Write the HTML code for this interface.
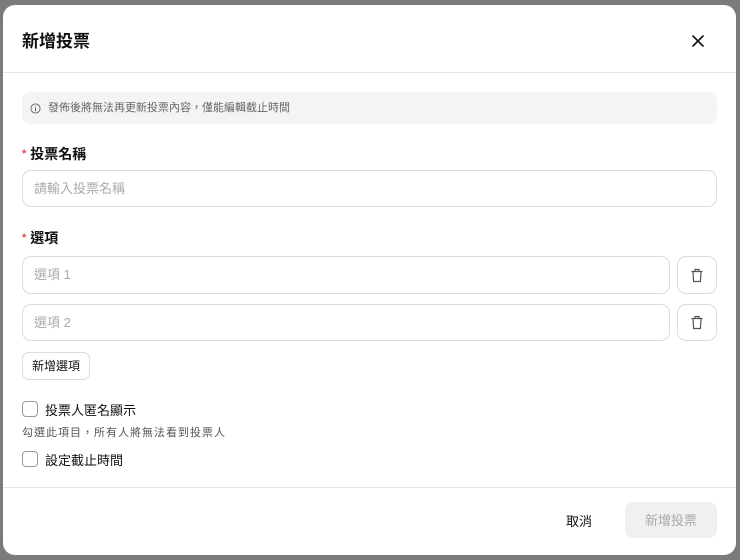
<!DOCTYPE html>
<html><head><meta charset="utf-8"><style>
*{box-sizing:border-box;margin:0;padding:0}
body{width:740px;height:560px;background:#7b7b7b;font-family:"Liberation Sans","Noto Sans CJK TC",sans-serif;position:relative;overflow:hidden;color:#111}
.m{position:absolute;left:3px;top:5px;width:733px;height:550px;background:#fff;border-radius:12px}
.a{position:absolute}
.title{left:19px;top:22px;font-size:17px;font-weight:bold}
.hr{left:0;width:733px;height:1px;background:#e3e3e3}
.info{left:19px;top:87px;width:695px;height:32px;background:#f4f4f4;border-radius:8px;font-size:11px;color:#666;line-height:32px;padding-left:26px}
.lab{font-size:14px;font-weight:bold;left:19px}
.lab b{color:#e5484d;font-size:11px;margin-right:4px;vertical-align:2px}
.in{border:1px solid #dcdcdc;border-radius:9px;height:38px;font-size:13px;color:#aaa;line-height:36px;padding-left:11px}
.tb{left:674px;width:40px;height:38px;border:1px solid #dcdcdc;border-radius:9px;display:flex;align-items:center;justify-content:center}
.btn{left:19px;top:347px;width:68px;height:28px;border:1px solid #dcdcdc;border-radius:7px;font-size:12px;line-height:26px;text-align:center}
.cb{left:19px;width:16px;height:16px;border:1.5px solid #999;border-radius:4px}
.ct{left:42px;font-size:13px;top:0}
</style></head><body><div class="m">
<div class="a title">新增投票</div>
<svg class="a" style="left:689px;top:30px" width="12" height="12" viewBox="0 0 12 12"><path d="M1 1L11 11M11 1L1 11" stroke="#111" stroke-width="1.6" stroke-linecap="round"/></svg>
<div class="a hr" style="top:67px"></div>
<div class="a info">發佈後將無法再更新投票內容，僅能編輯截止時間</div>
<svg class="a" style="left:27px;top:98px" width="11" height="11" viewBox="0 0 12 12"><circle cx="6" cy="6" r="5" fill="none" stroke="#666" stroke-width="1"/><path d="M6 5.2V9M6 3v1" stroke="#666" stroke-width="1.1"/></svg>
<div class="a lab" style="top:139px"><b>*</b>投票名稱</div>
<div class="a in" style="left:19px;top:165px;width:695px;height:37px">請輸入投票名稱</div>
<div class="a lab" style="top:223px"><b>*</b>選項</div>
<div class="a in" style="left:19px;top:251px;width:648px">選項 1</div>
<div class="a tb" style="top:251px"><svg width="14" height="15" viewBox="0 0 14 15"><path d="M1.5 3.5H12.5M5 3.5V1.5H9V3.5M3 3.5L3.6 13.5H10.4L11 3.5" fill="none" stroke="#555" stroke-width="1.2"/></svg></div>
<div class="a in" style="left:19px;top:299px;width:648px;height:37px">選項 2</div>
<div class="a tb" style="top:299px;height:37px"><svg width="14" height="15" viewBox="0 0 14 15"><path d="M1.5 3.5H12.5M5 3.5V1.5H9V3.5M3 3.5L3.6 13.5H10.4L11 3.5" fill="none" stroke="#555" stroke-width="1.2"/></svg></div>
<div class="a btn">新增選項</div>
<div class="a cb" style="top:396px"></div>
<div class="a ct" style="top:395px">投票人匿名顯示</div>
<div class="a" style="left:19px;top:419px;font-size:11px;color:#555;letter-spacing:1px">勾選此項目，所有人將無法看到投票人</div>
<div class="a cb" style="top:446px"></div>
<div class="a ct" style="top:445px">設定截止時間</div>
<div class="a hr" style="top:482px"></div>
<div class="a" style="left:563px;top:506px;font-size:13px">取消</div>
<div class="a" style="left:622px;top:497px;width:92px;height:36px;background:#f0f0f0;border-radius:8px;color:#aaa;font-size:13px;line-height:37px;text-align:center">新增投票</div>
</div></body></html>
